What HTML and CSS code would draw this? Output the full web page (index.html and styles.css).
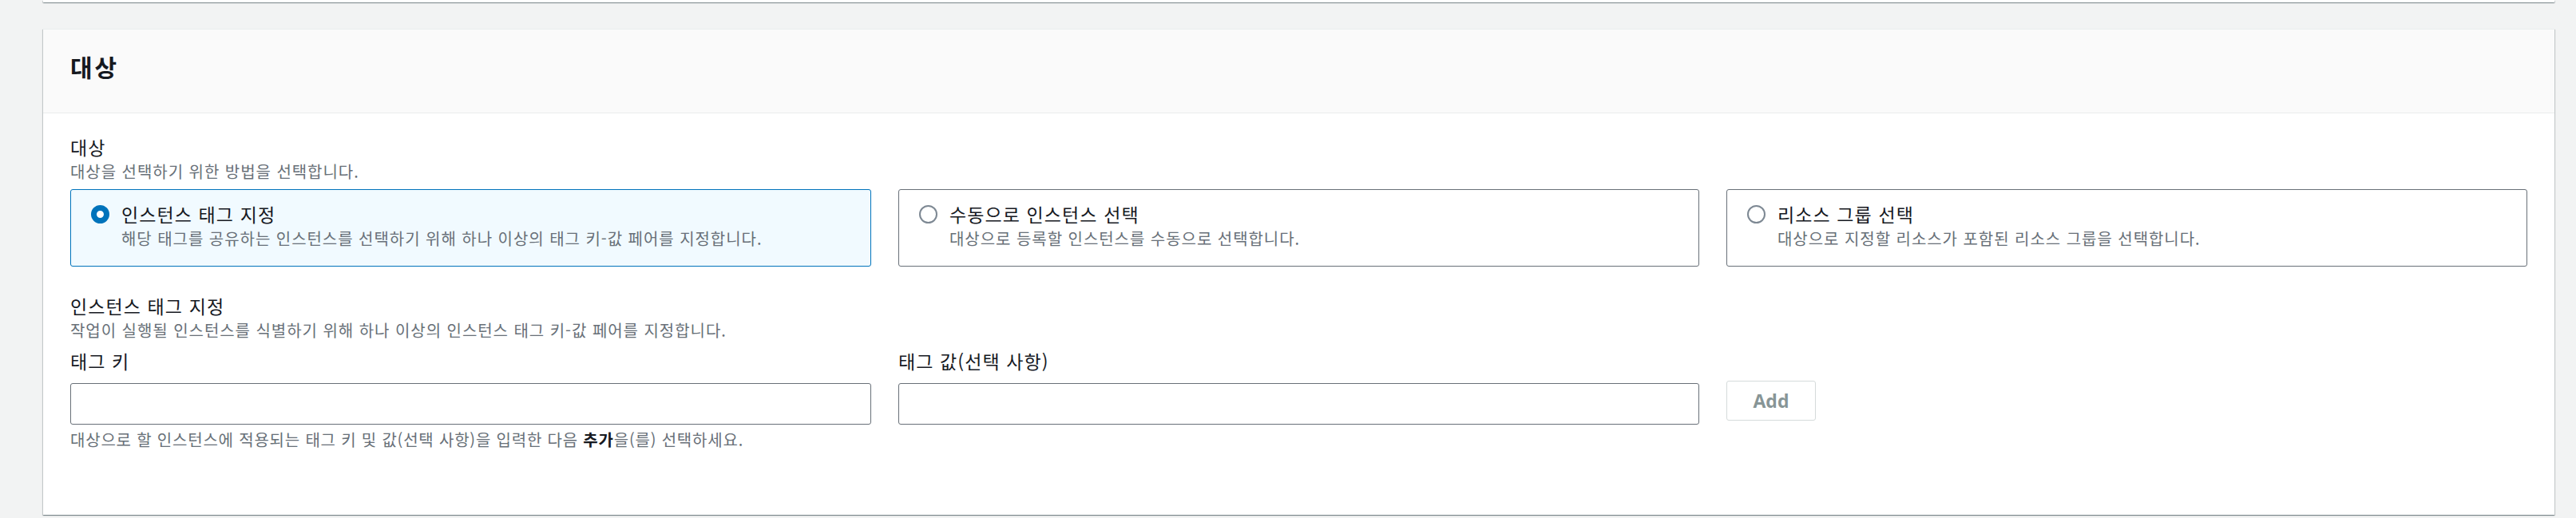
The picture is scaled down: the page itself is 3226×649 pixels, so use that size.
FILE: index.html
```html
<!DOCTYPE html>
<html lang="ko">
<head>
<meta charset="utf-8">
<title>대상</title>
<link rel="stylesheet" href="styles.css">
</head>
<body>
<div class="page">
  <div class="prev-card"></div>
  <section class="card">
    <div class="card-header">
      <h2 class="card-title">대상</h2>
    </div>
    <div class="card-body">
      <div class="field">
        <div class="label">대상</div>
        <div class="desc">대상을 선택하기 위한 방법을 선택합니다.</div>
        <div class="tiles">
          <div class="tile tile-selected">
            <span class="radio radio-on"></span>
            <div class="tile-text">
              <div class="label">인스턴스 태그 지정</div>
              <div class="desc">해당 태그를 공유하는 인스턴스를 선택하기 위해 하나 이상의 태그 키-값 페어를 지정합니다.</div>
            </div>
          </div>
          <div class="tile">
            <span class="radio"></span>
            <div class="tile-text">
              <div class="label">수동으로 인스턴스 선택</div>
              <div class="desc">대상으로 등록할 인스턴스를 수동으로 선택합니다.</div>
            </div>
          </div>
          <div class="tile">
            <span class="radio"></span>
            <div class="tile-text">
              <div class="label">리소스 그룹 선택</div>
              <div class="desc">대상으로 지정할 리소스가 포함된 리소스 그룹을 선택합니다.</div>
            </div>
          </div>
        </div>
      </div>

      <div class="field section">
        <div class="label">인스턴스 태그 지정</div>
        <div class="desc">작업이 실행될 인스턴스를 식별하기 위해 하나 이상의 인스턴스 태그 키-값 페어를 지정합니다.</div>
        <div class="tag-row">
          <div class="tag-col">
            <label class="label field-label" for="tagkey">태그 키</label>
            <input class="input" id="tagkey" type="text">
          </div>
          <div class="tag-col">
            <label class="label field-label" for="tagval">태그 값(선택 사항)</label>
            <input class="input" id="tagval" type="text">
          </div>
          <div class="tag-col btn-col">
            <button class="btn" type="button" disabled>Add</button>
          </div>
        </div>
        <div class="desc hint">대상으로 할 인스턴스에 적용되는 태그 키 및 값(선택 사항)을 입력한 다음 <b>추가</b>을(를) 선택하세요.</div>
      </div>
    </div>
  </section>
</div>
</body>
</html>
```

FILE: styles.css
```css
* { box-sizing: border-box; }

html, body {
  margin: 0;
  padding: 0;
  background: #f2f3f3;
}

body {
  font-family: "Noto Sans CJK KR", "Noto Sans", sans-serif;
  color: #16191f;
  width: 3226px;
  height: 649px;
  overflow: hidden;
}

.page {
  padding: 0 27px 0 54px;
}

.prev-card {
  height: 3px;
  background: #ffffff;
  box-shadow: 0 1px 1px 0 rgba(0, 28, 36, 0.3), 1px 1px 1px 0 rgba(0, 28, 36, 0.15), -1px 1px 1px 0 rgba(0, 28, 36, 0.15);
}

.card {
  margin-top: 33px;
  background: #ffffff;
  border-top: 1px solid #eaeded;
  box-shadow: 0 1px 1px 0 rgba(0, 28, 36, 0.3), 1px 1px 1px 0 rgba(0, 28, 36, 0.15), -1px 1px 1px 0 rgba(0, 28, 36, 0.15);
}

.card-header {
  background: #fafafa;
  border-bottom: 1px solid #eaeded;
  padding: 24px 34px 35px;
}

.card-title {
  margin: 0;
  font-size: 30px;
  line-height: 45px;
  font-weight: 700;
  letter-spacing: 3px;
  color: #16191f;
}

.card-body {
  padding: 25px 34px 81px;
}

.label {
  display: block;
  font-size: 23px;
  line-height: 34px;
  letter-spacing: 1.1px;
  color: #16191f;
}

.desc {
  font-size: 20px;
  line-height: 27px;
  letter-spacing: 0.95px;
  color: #687078;
}

.tiles {
  display: grid;
  grid-template-columns: repeat(3, 1fr);
  gap: 34px;
  margin-top: 9px;
}

.tile {
  display: flex;
  align-items: flex-start;
  gap: 15px;
  height: 97px;
  padding: 13px 24px 0 25px;
  border: 1px solid #687078;
  border-radius: 3px;
  background: #ffffff;
}

.tile-selected {
  border-color: #0073bb;
  background: #f1faff;
}

.radio {
  flex: none;
  width: 23px;
  height: 23px;
  margin-top: 6px;
  border-radius: 50%;
  border: 2px solid #7d8893;
  background: #ffffff;
}

.radio-on {
  border: 7px solid #0073bb;
  background: #ffffff;
}

.tile-text {
  min-width: 0;
}

.section {
  margin-top: 32px;
}

.tag-row {
  display: grid;
  grid-template-columns: repeat(3, 1fr);
  gap: 34px;
  margin-top: 8px;
}

.tag-col {
  display: flex;
  flex-direction: column;
}

.field-label {
  margin-bottom: 11px;
}

.input {
  display: block;
  width: 100%;
  height: 52px;
  border: 1px solid #687078;
  border-radius: 3px;
  background: #ffffff;
  font-family: inherit;
  font-size: 20px;
  padding: 0 16px;
  margin: 0;
}

.btn-col {
  padding-top: 42px;
  align-items: flex-start;
}

.btn {
  width: 112px;
  height: 50px;
  margin: 0;
  padding: 0;
  border: 1px solid #d5dbdb;
  border-radius: 3px;
  background: #ffffff;
  color: #879596;
  font-family: "Open Sans", "Noto Sans", sans-serif;
  font-weight: 700;
  font-size: 23px;
  line-height: 1;
}

.hint {
  margin-top: 5px;
  letter-spacing: 0.8px;
}

.hint b {
  font-weight: 700;
  color: #16191f;
}
```
